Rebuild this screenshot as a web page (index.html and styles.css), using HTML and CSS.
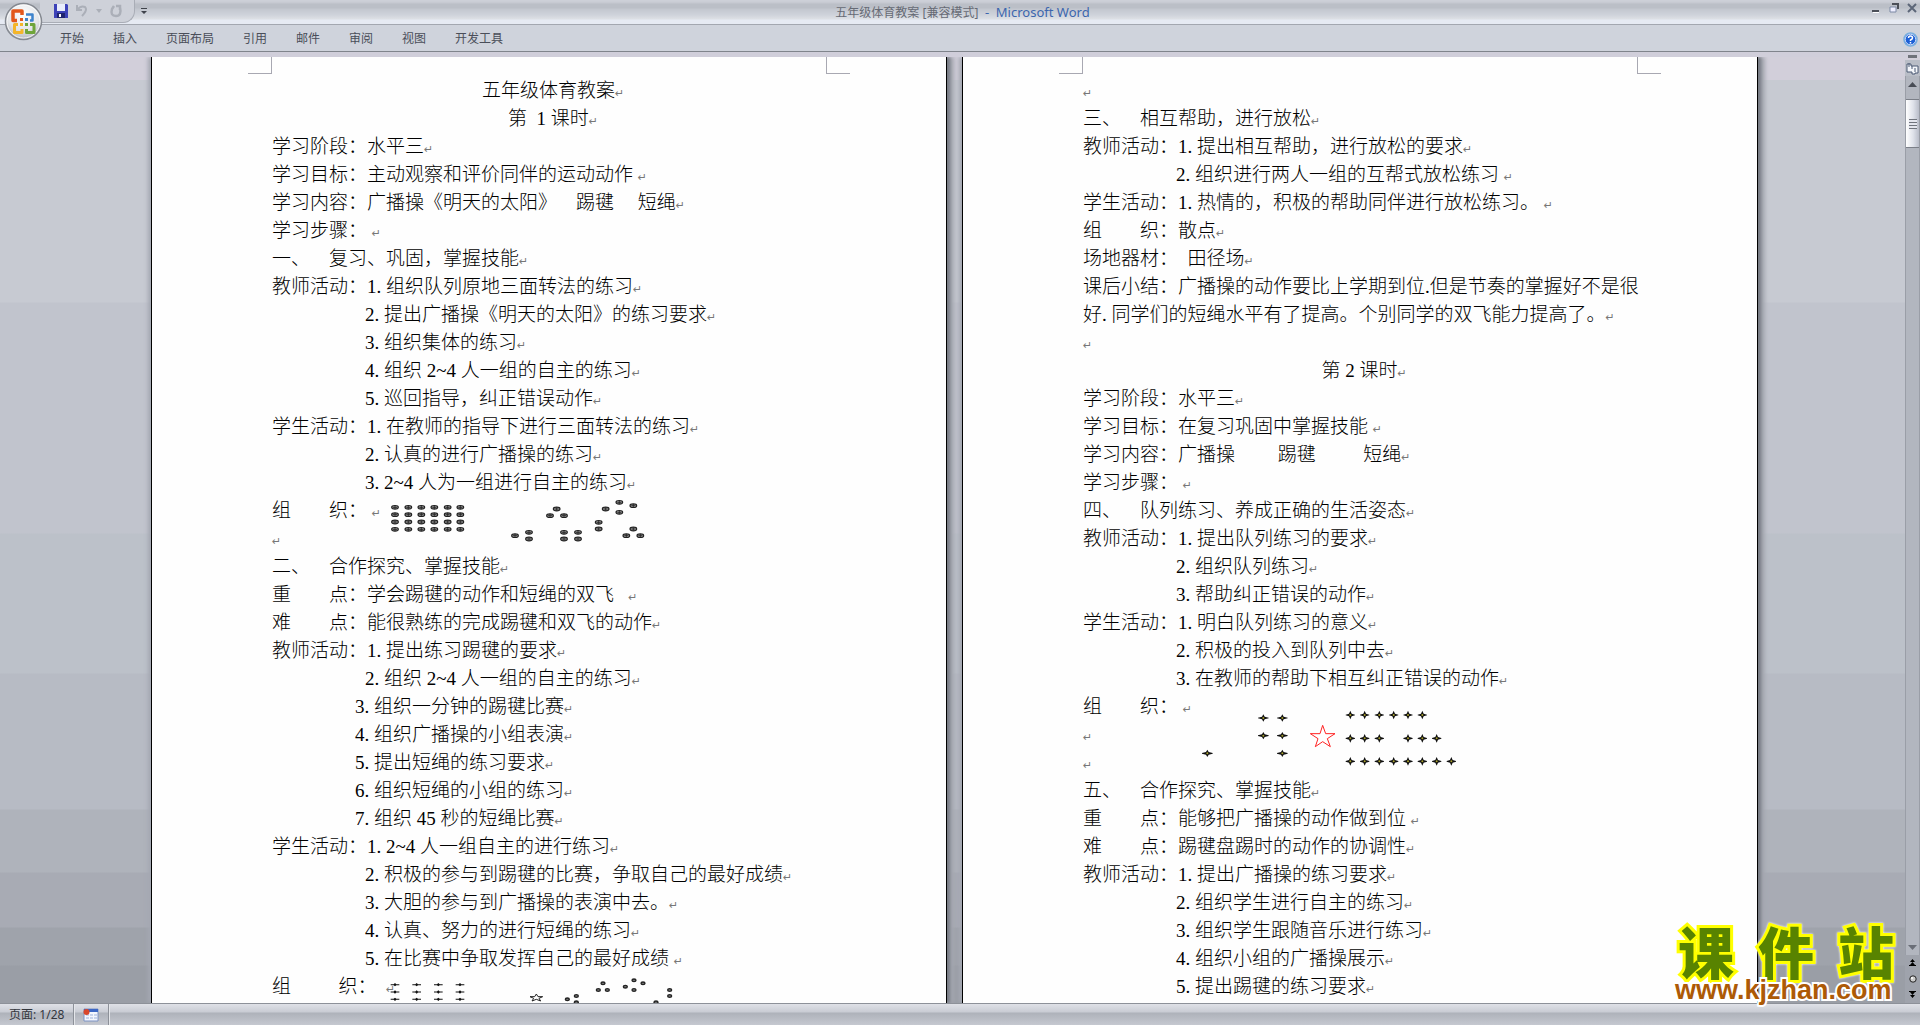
FILE: index.html
```html
<!DOCTYPE html>
<html lang="zh-CN">
<head>
<meta charset="utf-8">
<title>五年级体育教案 [兼容模式] - Microsoft Word</title>
<link rel="stylesheet" href="styles.css">
</head>
<body>
<svg width="0" height="0" class="defs" aria-hidden="true">
  <defs>
    <g id="oval"><ellipse rx="10" ry="5.500" fill="#999" stroke="#222" stroke-width="3.500"/><path d="M-6 0H6M0-5V5" stroke="#222" stroke-width="2.500"/></g>
    <g id="dot"><ellipse rx="6" ry="4" fill="#777" stroke="#222" stroke-width="4"/></g>
    <path id="flat" d="M-13-1.500H-4L0-5 4-1.500H13V1.500H4L0 5-4 1.500H-13Z" fill="#111"/>
    <g id="spark"><path d="M0-13 4-4 14-1V1L4 4 0 13-4 4-14 1V-1L-4-4Z" fill="#111"/><circle r="3" fill="#a8a02c"/></g>
    <g id="wide"><path d="M0-11 4-4 16-1V1L4 4 0 11-4 4-16 1V-1L-4-4Z" fill="#111"/><circle r="3" fill="#a8a02c"/></g>
  </defs>
</svg>
<div class="app">
  <header class="titlebar">
    <button class="office" aria-label="Office 按钮">
      <svg width="39" height="39" viewBox="0 0 39 39">
        <defs><radialGradient id="orb" cx=".5" cy=".3" r=".75"><stop offset="0" stop-color="#fff"/><stop offset=".6" stop-color="#e3e5e9"/><stop offset="1" stop-color="#a8abb3"/></radialGradient></defs>
        <circle cx="19.500" cy="19.500" r="18" fill="url(#orb)" stroke="#858991" stroke-width="1.500"/>
        <circle cx="19.500" cy="19.500" r="16.500" fill="none" stroke="#fff" stroke-opacity=".8"/>
        <g fill="none" stroke-width="3" stroke-linejoin="round">
          <path d="M13 18.500H9V9H18V13" stroke="#e2571c" stroke-width="3.500"/>
          <path d="M22 12.500H28.500V18.500H26" stroke="#3e83cc" stroke-width="2.500"/>
          <path d="M14 22.500H10.500V30.500H18V27" stroke="#f4b52a"/>
          <path d="M26 22.500H30V30.500H22.500V27" stroke="#6fa53a"/>
        </g>
        <path d="M16 16h3v3h-3z" fill="#e2571c"/><path d="M21 16h3v3h-3z" fill="#3e83cc"/><path d="M16 21h3v3h-3z" fill="#f4b52a"/><path d="M21 21h3v3h-3z" fill="#6fa53a"/>
      </svg>
    </button>
    <div class="quick">
      <button aria-label="保存"><svg width="14" height="14" viewBox="0 0 14 14"><path d="M0 0H13L14 1V14H0Z" fill="#3d42b8"/><path d="M3 0H11V7H3Z" fill="#e9edfb"/><path d="M3 9H11V14H3Z" fill="#20246f"/><path d="M5 10H7V13H5Z" fill="#fff"/></svg></button>
      <button aria-label="撤消"><svg width="14" height="14" viewBox="0 0 14 14" fill="none" stroke="#abafb8" stroke-width="2"><path d="M2 1V6H7M2 6Q6 1 10 3 13 6 7 12"/></svg></button>
      <button aria-label="撤消列表"><svg width="6" height="4" viewBox="0 0 6 4"><path d="M0 0H6L3 4Z" fill="#abafb8"/></svg></button>
      <button aria-label="恢复"><svg width="14" height="14" viewBox="0 0 14 14" fill="none" stroke="#abafb8" stroke-width="2.500"><path d="M7 2H11V6M11 3Q13 12 7 12 1 12 3 5L5 2"/></svg></button>
    </div>
    <button class="more" aria-label="自定义快速访问工具栏"><svg width="6" height="7" viewBox="0 0 6 7"><path d="M0 0H6V1H0ZM0 3H6L3 6Z" fill="#3f434b"/></svg></button>
    <h1 class="caption">五年级体育教案 [兼容模式] <span>&nbsp;- &nbsp;Microsoft Word</span></h1>
    <div class="winbtns">
      <button aria-label="最小化"><svg width="10" height="10" viewBox="0 0 10 10"><path d="M1 7H8V9H1Z" fill="#4b4f58"/><path d="M2 9H8V10H2Z" fill="#fff"/></svg></button>
      <button aria-label="还原"><svg width="10" height="10" viewBox="0 0 10 10"><path d="M3 1H9V6" fill="none" stroke="#4b4f58" stroke-width="2"/><path d="M1 4H7V9H1Z" fill="#eef" stroke="#7c8aa5"/></svg></button>
      <button aria-label="关闭"><svg width="10" height="10" viewBox="0 0 10 10"><path d="M1 1 9 9M9 1 1 9" stroke="#5c6678" stroke-width="2"/></svg></button>
    </div>
  </header>
  <nav class="ribbon">
    <button>开始</button><button>插入</button><button>页面布局</button><button>引用</button><button>邮件</button><button>审阅</button><button>视图</button><button>开发工具</button>
    <button class="help" aria-label="帮助"><svg width="15" height="15" viewBox="0 0 15 15"><circle cx="7.500" cy="7.500" r="6.500" fill="#1d5fd6" stroke="#79aede" stroke-width="1.500"/><circle cx="7.500" cy="7.500" r="5.300" fill="none" stroke="#fff" stroke-width=".8"/><path d="M5.500 6Q5.500 4 7.500 4T9.500 6Q9.500 7 7.500 8V9M7.500 10V11.500" fill="none" stroke="#fff" stroke-width="1.500"/></svg></button>
  </nav>
  <div class="main">
    <main class="desk">
      <article class="page">
        <i class="mark left"></i><i class="mark right"></i>
        <p class="c">五年级体育教案</p>
        <p class="c">第  1 课时</p>
        <p>学习阶段：水平三</p>
        <p>学习目标：主动观察和评价同伴的运动动作 </p>
        <p>学习内容：广播操《明天的太阳》　踢毽　 短绳</p>
        <p>学习步骤： </p>
        <p>一、　复习、巩固，掌握技能</p>
        <p>教师活动：1. 组织队列原地三面转法的练习</p>
        <p class="in">2. 提出广播操《明天的太阳》的练习要求</p>
        <p class="in">3. 组织集体的练习</p>
        <p class="in">4. 组织 2~4 人一组的自主的练习</p>
        <p class="in">5. 巡回指导，纠正错误动作</p>
        <p>学生活动：1. 在教师的指导下进行三面转法的练习</p>
        <p class="in">2. 认真的进行广播操的练习</p>
        <p class="in">3. 2~4 人为一组进行自主的练习</p>
        <p>组　　织： <svg class="drawing" width="300" height="45" viewBox="390 51 900 135">
          <use href="#oval" x="405" y="82"/><use href="#oval" x="445" y="82"/><use href="#oval" x="484" y="82"/><use href="#oval" x="523" y="82"/><use href="#oval" x="563" y="82"/><use href="#oval" x="601" y="82"/>
          <use href="#oval" x="405" y="104"/><use href="#oval" x="445" y="104"/><use href="#oval" x="484" y="104"/><use href="#oval" x="523" y="104"/><use href="#oval" x="563" y="104"/><use href="#oval" x="601" y="104"/>
          <use href="#oval" x="405" y="126"/><use href="#oval" x="445" y="126"/><use href="#oval" x="484" y="126"/><use href="#oval" x="523" y="126"/><use href="#oval" x="563" y="126"/><use href="#oval" x="601" y="126"/>
          <use href="#oval" x="405" y="148"/><use href="#oval" x="445" y="148"/><use href="#oval" x="484" y="148"/><use href="#oval" x="523" y="148"/><use href="#oval" x="563" y="148"/><use href="#oval" x="601" y="148"/>
          <use href="#oval" x="765" y="167"/><use href="#oval" x="807" y="157"/><use href="#oval" x="807" y="177"/><use href="#oval" x="912" y="157"/><use href="#oval" x="954" y="157"/><use href="#oval" x="912" y="177"/><use href="#oval" x="954" y="177"/>
          <use href="#oval" x="890" y="87"/><use href="#oval" x="870" y="107"/><use href="#oval" x="912" y="107"/><use href="#oval" x="1037" y="87"/><use href="#oval" x="1078" y="67"/><use href="#oval" x="1120" y="77"/><use href="#oval" x="1078" y="97"/>
          <use href="#oval" x="1016" y="127"/><use href="#oval" x="1016" y="147"/><use href="#oval" x="1120" y="147"/><use href="#oval" x="1099" y="167"/><use href="#oval" x="1141" y="167"/>
        </svg></p>
        <p></p>
        <p>二、　合作探究、掌握技能</p>
        <p>重　　点：学会踢毽的动作和短绳的双飞   </p>
        <p>难　　点：能很熟练的完成踢毽和双飞的动作</p>
        <p>教师活动：1. 提出练习踢毽的要求</p>
        <p class="in">2. 组织 2~4 人一组的自主的练习</p>
        <p class="in2">3. 组织一分钟的踢毽比赛</p>
        <p class="in2">4. 组织广播操的小组表演</p>
        <p class="in2">5. 提出短绳的练习要求</p>
        <p class="in2">6. 组织短绳的小组的练习</p>
        <p class="in2">7. 组织 45 秒的短绳比赛</p>
        <p>学生活动：1. 2~4 人一组自主的进行练习</p>
        <p class="in">2. 积极的参与到踢毽的比赛，争取自己的最好成绩</p>
        <p class="in">3. 大胆的参与到广播操的表演中去。</p>
        <p class="in">4. 认真、努力的进行短绳的练习</p>
        <p class="in">5. 在比赛中争取发挥自己的最好成绩 </p>
        <p>组　　  织：  <svg class="drawing" width="300" height="30" viewBox="390 39 900 90">
          <use href="#flat" x="405" y="74"/><use href="#flat" x="470" y="74"/><use href="#flat" x="535" y="74"/><use href="#flat" x="600" y="74"/>
          <use href="#flat" x="405" y="96"/><use href="#flat" x="470" y="96"/><use href="#flat" x="535" y="96"/><use href="#flat" x="600" y="96"/>
          <use href="#flat" x="405" y="118"/><use href="#flat" x="470" y="118"/><use href="#flat" x="535" y="118"/><use href="#flat" x="600" y="118"/>
          <path d="M829 102 834 110H848L837 115 842 123 829 118 816 123 821 115 810 110H824Z" fill="#fff" stroke="#222" stroke-width="3"/>
          <use href="#dot" x="922" y="118"/><use href="#dot" x="949" y="108"/><use href="#dot" x="949" y="127"/>
          <use href="#dot" x="1029" y="70"/><use href="#dot" x="1015" y="90"/><use href="#dot" x="1042" y="90"/>
          <use href="#dot" x="1096" y="80"/><use href="#dot" x="1122" y="61"/><use href="#dot" x="1149" y="70"/><use href="#dot" x="1122" y="90"/>
          <use href="#dot" x="1188" y="127"/><use href="#dot" x="1229" y="90"/><use href="#dot" x="1229" y="108"/>
        </svg></p>
      </article>
      <article class="page">
        <i class="mark left"></i><i class="mark right"></i>
        <p></p>
        <p>三、　相互帮助，进行放松</p>
        <p>教师活动：1. 提出相互帮助，进行放松的要求</p>
        <p class="in">2. 组织进行两人一组的互帮式放松练习 </p>
        <p>学生活动：1. 热情的，积极的帮助同伴进行放松练习。 </p>
        <p>组　　织：散点</p>
        <p>场地器材：  田径场</p>
        <p class="wrap">课后小结：广播操的动作要比上学期到位.但是节奏的掌握好不是很</p>
        <p>好. 同学们的短绳水平有了提高。个别同学的双飞能力提高了。</p>
        <p></p>
        <p class="c">第 2 课时</p>
        <p>学习阶段：水平三</p>
        <p>学习目标：在复习巩固中掌握技能 </p>
        <p>学习内容：广播操　　 踢毽　　  短绳</p>
        <p>学习步骤： </p>
        <p>四、　队列练习、养成正确的生活姿态</p>
        <p>教师活动：1. 提出队列练习的要求</p>
        <p class="in">2. 组织队列练习</p>
        <p class="in">3. 帮助纠正错误的动作</p>
        <p>学生活动：1. 明白队列练习的意义</p>
        <p class="in">2. 积极的投入到队列中去</p>
        <p class="in">3. 在教师的帮助下相互纠正错误的动作</p>
        <p>组　　织： <svg class="drawing" width="280" height="76" viewBox="393 9 840 228">
          <use href="#wide" x="580" y="84"/><use href="#wide" x="637" y="84"/><use href="#wide" x="580" y="137"/><use href="#wide" x="637" y="137"/><use href="#wide" x="637" y="190"/><use href="#wide" x="412" y="190"/>
          <path d="M758 106 767 131H795L772 146 781 170 758 155 736 170 744 146 721 131H750Z" fill="#fff" stroke="#f22" stroke-width="3"/>
          <use href="#spark" x="841" y="75"/><use href="#spark" x="884" y="75"/><use href="#spark" x="928" y="75"/><use href="#spark" x="971" y="75"/><use href="#spark" x="1014" y="75"/><use href="#spark" x="1057" y="75"/>
          <use href="#spark" x="841" y="145"/><use href="#spark" x="884" y="145"/><use href="#spark" x="928" y="145"/><use href="#spark" x="1014" y="145"/><use href="#spark" x="1057" y="145"/><use href="#spark" x="1100" y="145"/>
          <use href="#spark" x="841" y="214"/><use href="#spark" x="884" y="214"/><use href="#spark" x="928" y="214"/><use href="#spark" x="971" y="214"/><use href="#spark" x="1014" y="214"/><use href="#spark" x="1057" y="214"/><use href="#spark" x="1100" y="214"/><use href="#spark" x="1144" y="214"/>
        </svg></p>
        <p></p>
        <p></p>
        <p>五、　合作探究、掌握技能</p>
        <p>重　　点：能够把广播操的动作做到位 </p>
        <p>难　　点：踢毽盘踢时的动作的协调性</p>
        <p>教师活动：1. 提出广播操的练习要求</p>
        <p class="in">2. 组织学生进行自主的练习</p>
        <p class="in">3. 组织学生跟随音乐进行练习</p>
        <p class="in">4. 组织小组的广播操展示</p>
        <p class="in">5. 提出踢毽的练习要求</p>
      </article>
    </main>
    <aside class="scroll">
      <button class="split" aria-label="拆分"></button>
      <button class="ruler" aria-label="标尺"><svg width="13" height="13" viewBox="0 0 13 13"><path d="M1 2H5V4H12V11H9V12H6V10H1Z" fill="#f4f6fa" stroke="#4c5a75"/><path d="M3 1V5M6 4V7M9 6V10" stroke="#4c5a75"/></svg></button>
      <div class="track">
        <button aria-label="向上"><svg width="9" height="5" viewBox="0 0 9 5"><path d="M0 5 4.500 0 9 5Z" fill="#484c55"/></svg></button>
        <div class="thumb"></div>
        <button class="down" aria-label="向下"><svg width="9" height="5" viewBox="0 0 9 5"><path d="M0 0H9L4.500 5Z" fill="#6a6e77"/></svg></button>
      </div>
      <div class="browse">
        <button aria-label="前一页"><svg width="7" height="8" viewBox="0 0 7 8"><path d="M3.500 0 6 3H1ZM3.500 3 6 6H1ZM0 6H7V7H0Z" fill="#000"/></svg></button>
        <button aria-label="选择浏览对象"><svg width="8" height="8" viewBox="0 0 8 8"><circle cx="4" cy="4" r="3.200" fill="#ccc" stroke="#222"/><circle cx="3" cy="3" r="1" fill="#fff"/></svg></button>
        <button aria-label="下一页"><svg width="7" height="8" viewBox="0 0 7 8"><path d="M0 0H7V1H0ZM1 1H6L3.500 4ZM1 4H6L3.500 7Z" fill="#000"/></svg></button>
      </div>
    </aside>
    <div class="brand">
      <div class="name"><span>课</span><span>件</span><span>站</span></div>
      <div class="url">www.kjzhan.com</div>
    </div>
  </div>
  <footer class="status">
    <button>页面: 1/28</button>
    <button aria-label="宏录制"><svg width="16" height="14" viewBox="0 0 16 14"><path d="M1 1H15V13H1Z" fill="#f3f6fd" stroke="#7c93c4"/><path d="M1 1H15V4H1Z" fill="#3b66c4"/><path d="M3 7H6M7 7H10M11 7H14M3 10H6M7 10H10M11 10H14" stroke="#9db1dc"/><circle cx="3.500" cy="4" r="3" fill="#d9472b"/></svg></button>
  </footer>
</div>
</body>
</html>
```
FILE: styles.css
```css
* { box-sizing: border-box; }
body { margin: 0; }
button { border: 0; padding: 0; background: none; color: inherit; font: inherit; display: flex; align-items: center; justify-content: center; }
svg { display: block; flex: none; }
.defs { position: absolute; }

.app {
  height: 100vh;
  display: flex;
  flex-direction: column;
  overflow: hidden;
  font: 12px/16px "Noto Sans", "Noto Sans CJK SC", sans-serif;
  color: #4a4e59;
}

.titlebar {
  position: relative;
  height: 25px;
  flex: none;
  display: flex;
  align-items: flex-start;
  padding-left: 40px;
  border-bottom: 1px solid #a3a7b0;
  background: linear-gradient(#cdd0d8 0 1px, #c5c8d0 3px, #bbbfc7 4px 8px, #c3c7cf 9px, #cfd3db 15px, #dde0e5 19px, #e6eaf3 20px);
}
.office { position: absolute; left: 4px; top: 2px; z-index: 2; }
.quick {
  display: flex;
  align-items: center;
  gap: 7px;
  width: 95px;
  height: 23px;
  padding-left: 14px;
  border: 1px solid #a9adb6;
  border-top: 0;
  border-left: 0;
  border-radius: 0 0 12px 0;
  background: #ced1d9;
}
.more { height: 23px; margin-left: 6px; }
.caption {
  position: absolute;
  left: 5px;
  right: 0;
  top: 4px;
  margin: 0;
  font-size: 12px;
  font-weight: 400;
  text-align: center;
  color: #666a74;
}
.caption span { color: #3c66ae; font-size: 13px; }
.winbtns { display: flex; gap: 8px; margin-left: auto; padding: 3px 3px 0 0; z-index: 1; }

.ribbon {
  height: 27px;
  flex: none;
  display: flex;
  align-items: center;
  gap: 29px;
  padding: 2px 2px 0 60px;
  background: #cfd3dc;
  border-bottom: 1px solid #80848c;
}
.help { margin-left: auto; }

.main {
  position: relative;
  flex: 1;
  min-height: 0;
  display: flex;
  border-top: 5px solid #d0ceda;
  background: linear-gradient(#d2cfda 0 23px, #c7cad2 23px 245px, #c1c4cd 246px 476px, #bcc1c9 477px 616px, #b7bbc4 617px 752px, #afb3bb 753px 815px, #a8abb4 816px 870px, #9fa3ab 871px 908px, #9a9ea6 909px);
}
.desk { flex: 1; display: flex; justify-content: center; gap: 15px; padding-left: 4px; overflow: hidden; }
.page {
  position: relative;
  width: 796px;
  flex: none;
  padding: 20px 120px 0;
  background: #fefefe;
  border: 1px solid #000;
  border-width: 0 1px;
  box-shadow: 3px 0 3px #777b84, 7px 0 4px #a5a8b1, -3px 0 4px #a4a8b2;
  color: #000;
  font: 300 19px/28px "Liberation Serif", "Noto Sans CJK SC", serif;
  text-spacing-trim: space-all;
}
.page p { position: relative; margin: 0; height: 28px; white-space: pre; }
.page p::after { content: "↵"; font: 11px/12px "DejaVu Sans", sans-serif; color: #777; }
.page .wrap::after { content: none; }
.page .c { text-align: center; padding-left: 8px; }
.page .in { padding-left: 93px; }
.page .in2 { padding-left: 83px; }
.drawing { position: absolute; left: 118px; top: 0; }
.mark { position: absolute; top: 0; width: 24px; height: 17px; border-bottom: 1px solid #a8a8b2; }
.mark.left { left: 96px; border-right: 1px solid #a8a8b2; }
.mark.right { right: 96px; border-left: 1px solid #a8a8b2; }

.scroll { width: 15px; flex: none; display: flex; flex-direction: column; align-items: stretch; }
.split { height: 3px; margin: -2px 3px 2px; background: #6f727a; }
.ruler { height: 16px; background: #b9bdc6; }
.track {
  flex: 1;
  display: flex;
  flex-direction: column;
  background: #b2b6bf;
  border: 1px solid #9a9ea7;
  border-width: 0 1px;
}
.track button { height: 16px; }
.thumb {
  height: 49px;
  margin-top: 7px;
  border: 1px solid #7b7f88;
  border-width: 1px 0;
  background:
    repeating-linear-gradient(#70747d 0 1px, #e4e6ee 1px 3px) center / 8px 10px no-repeat,
    linear-gradient(90deg, #fff, #dfe2ea 55%, #b9bdc9);
}
.track .down { margin-top: auto; }
.browse { height: 48px; display: flex; flex-direction: column; justify-content: space-around; background: #9fa3ac; }

.brand { position: absolute; right: 20px; bottom: 0; width: 228px; }
.name {
  display: flex;
  justify-content: space-between;
  padding: 0 6px;
  font: 900 56px/54px "Noto Sans CJK SC", sans-serif;
  color: #588300;
  -webkit-text-stroke: 6px #ff0;
  paint-order: stroke fill;
  filter: drop-shadow(0 0 1px #fff);
}
.url {
  position: relative;
  padding: 0 3px;
  font: bold 27px/26px "Liberation Sans", sans-serif;
  color: #ad5a06;
  -webkit-text-stroke: 4px #fff;
  paint-order: stroke fill;
}

.status {
  height: 22px;
  flex: none;
  display: flex;
  border-top: 1px solid #8d9199;
  background: linear-gradient(#dfe1e7, #c9ccd4 8px, #aeb2ba 9px, #c5c8d0);
  color: #33363d;
}
.status button { padding: 0 9px; border-right: 1px solid #8d9199; box-shadow: 1px 0 #e4e6ea; }
```
